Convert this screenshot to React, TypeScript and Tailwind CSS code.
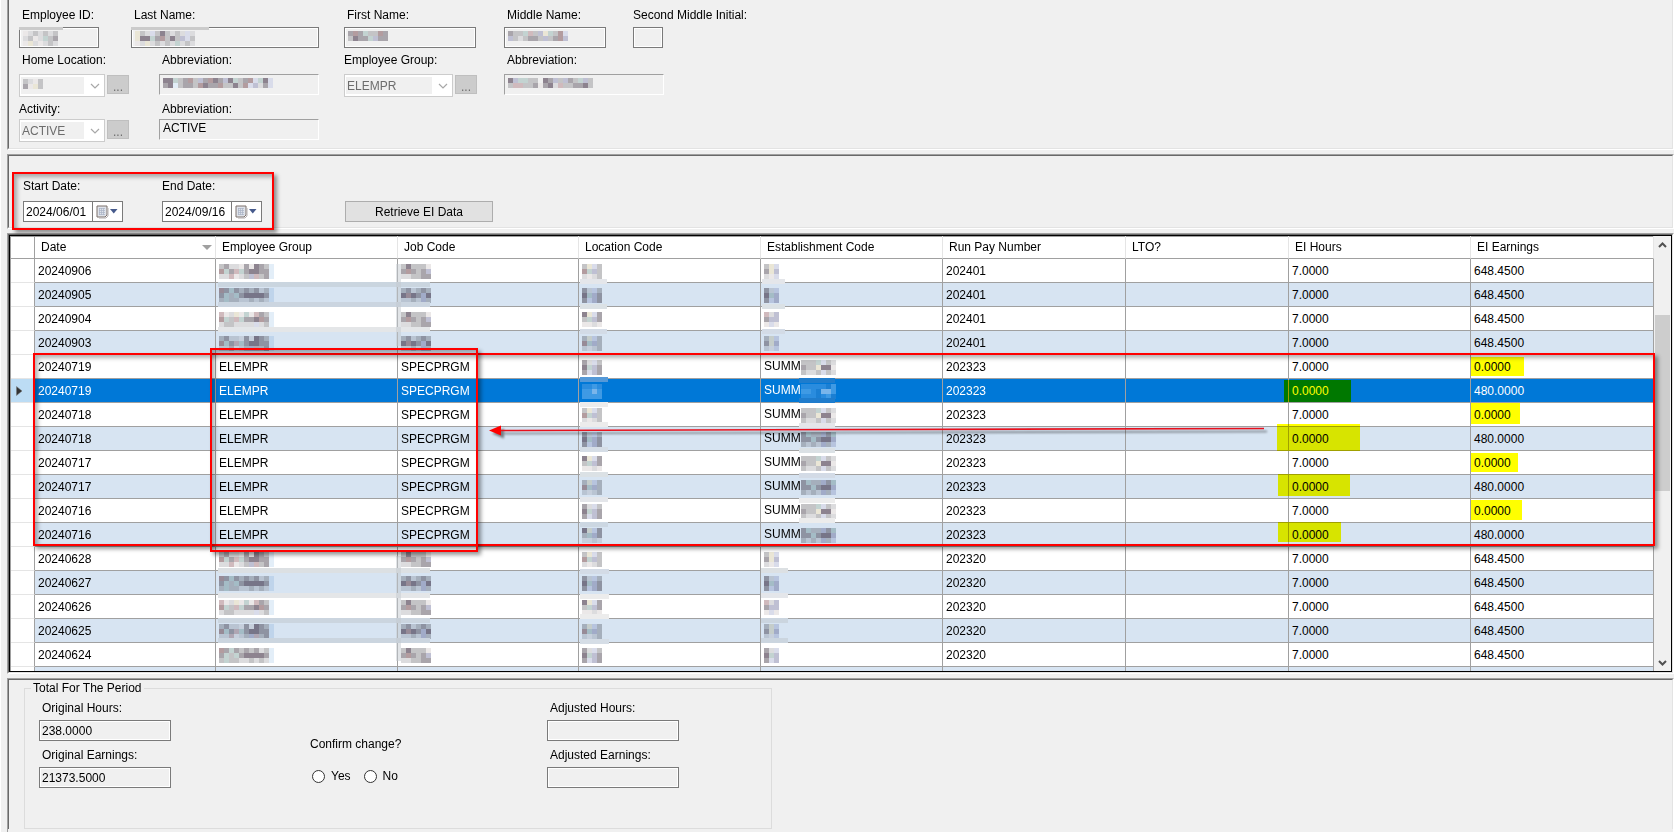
import React, { useState } from 'react';
import { clsx } from 'clsx';

const PALETTE: Record<string, string> = {
  a: '#8d838f',
  b: '#a9a5ab',
  c: '#c4c4c6',
  d: '#dcdcde',
  e: '#ebe8e8',
  k: '#d9dcea',
  l: '#bfc0d3',
  p: '#d0babd',
  r: '#b39c9f',
  t: '#c3d3d1',
  u: '#e3eef8',
  y: '#eae6d6',
  1: '#3f9ae4',
  2: '#2a8cde',
  3: '#7ab5ea',
  4: '#1b7fd3',
};

interface MosaicProps {
  rows: string[];
  className?: string;
}

// Redacted value, one letter per 5px block
const Mosaic: React.FC<MosaicProps> = ({ rows, className }) => (
  <svg
    width={rows[0].length * 5}
    height={rows.length * 5}
    shapeRendering="crispEdges"
    aria-hidden="true"
    className={className}
  >
    {rows.map((row, y) =>
      row.split('').map((key, x) =>
        PALETTE[key] ? (
          <rect key={`${x}-${y}`} x={x * 5} y={y * 5} width={5} height={5} fill={PALETTE[key]} />
        ) : null
      )
    )}
  </svg>
);

interface PanelProps {
  children: React.ReactNode;
  className?: string;
  open?: 'top' | 'bottom';
}

const Panel: React.FC<PanelProps> = ({ children, className, open }) => (
  <div
    className={clsx(
      'border-l border-l-[#a0a0a0] border-r border-r-white',
      open !== 'top' && 'border-t border-t-[#a0a0a0]',
      open !== 'bottom' && 'border-b border-b-white',
      className
    )}
  >
    <div
      className={clsx(
        'h-full border-l border-l-[#696969] border-r border-r-[#e3e3e3]',
        open !== 'top' && 'border-t border-t-[#696969]',
        open !== 'bottom' && 'border-b border-b-[#e3e3e3]'
      )}
    >
      {children}
    </div>
  </div>
);

interface FieldProps {
  id: string;
  label: string;
  value?: string;
  mosaic?: string[];
  smear?: string;
  sunken?: boolean;
  labelClass?: string;
  className?: string;
}

const Field: React.FC<FieldProps> = ({ id, label, value = '', mosaic, smear, sunken, labelClass = 'mb-1 pl-[3px]', className }) => (
  <div className={clsx('flex flex-col items-start', className)}>
    <label htmlFor={id} className={clsx('leading-4 whitespace-nowrap', labelClass)}>
      {label}
    </label>
    <div className="relative w-full">
      <input
        id={id}
        type="text"
        readOnly
        value={value}
        className={clsx(
          'block w-full h-[21px] px-0.5 border bg-[#f0f0f0] outline-none',
          sunken
            ? 'pb-1 pl-[3px] border-t-[#a0a0a0] border-l-[#a0a0a0] border-r-white border-b-white'
            : 'border-[#7a7a7a] shadow-[inset_0_0_0_1px_#fff]'
        )}
      />
      {smear && <span className={clsx('absolute top-0 left-0 h-[3px] bg-[#cbcbcb]', smear)} />}
      {mosaic && <Mosaic rows={mosaic} className="absolute top-1 left-1" />}
    </div>
  </div>
);

interface ComboProps {
  id: string;
  label: string;
  value: string;
  mosaic?: string[];
  width: string;
  labelClass: string;
}

const Combo: React.FC<ComboProps> = ({ id, label, value, mosaic, width, labelClass }) => (
  <div className="flex flex-col items-start">
    <label htmlFor={id} className={clsx('leading-4 whitespace-nowrap', labelClass)}>
      {label}
    </label>
    <div className="flex items-start gap-0.5">
      <div className={clsx('relative flex items-center h-[23px] px-px border border-[#cccccc] bg-white', width)}>
        <select
          id={id}
          disabled
          defaultValue={value}
          className="flex-1 min-w-0 h-[17px] pl-px leading-4 appearance-none bg-[#f0f0f0] text-[#6d6d6d] opacity-100"
        >
          <option value={value}>{value}</option>
        </select>
        <svg width="19" height="17" viewBox="0 0 19 17" className="shrink-0" aria-hidden="true">
          <path d="M7 7l4 4 4-4" fill="none" stroke="#a8a8a8" strokeWidth="1.2" />
        </svg>
        {mosaic && <Mosaic rows={mosaic} className="absolute top-1 left-[3px]" />}
      </div>
      <button
        type="button"
        disabled
        aria-label={`Browse ${label}`}
        className="mt-px w-[22px] h-[19px] pt-1 border border-[#bfbfbf] bg-[#cccccc] leading-3 text-[#6d6d6d]"
      >
        ...
      </button>
    </div>
  </div>
);

interface DateFieldProps {
  id: string;
  label: string;
  value: string;
  onChange: (value: string) => void;
}

const DateField: React.FC<DateFieldProps> = ({ id, label, value, onChange }) => (
  <div className="flex flex-col gap-[7px] w-[100px]">
    <label htmlFor={id} className="leading-4 whitespace-nowrap">
      {label}
    </label>
    <div className="flex h-[21px] border border-[#7a7a7a] bg-white">
      <input
        id={id}
        type="text"
        value={value}
        onChange={(e) => onChange(e.target.value)}
        className="w-[69px] pl-0.5 border-r border-[#7a7a7a] outline-none"
      />
      <button type="button" aria-label={`Pick ${label}`} className="flex flex-1 items-center pl-[3px] gap-px">
        <svg width="13" height="14" viewBox="0 0 13 14" aria-hidden="true">
          <path d="M1 1h10v9l-2 2H1z" fill="#dfe3ea" stroke="#7d706b" />
          <path d="M12 3v8l-2 2H3" fill="none" stroke="#b3aeb0" />
          <path d="M3 3.5h6M3 5.5h6M3 7.5h6M3 9.5h6M3.5 3v7M5.5 3v7M7.5 3v7" stroke="#a9b2c4" strokeWidth="0.7" />
        </svg>
        <svg width="8" height="5" viewBox="0 0 8 5" aria-hidden="true">
          <path d="M0 0h7.5L3.75 4.5z" fill="#465a8c" />
        </svg>
      </button>
    </div>
  </div>
);

const GROUP = [
  ['cbddebeabcu', 'rtbptbaabbu', 'ddpedclpcbu'],
  ['rbtbcbcbdcu', 'btctbaaaabu', 'ctccddcdcdu'],
  ['pedyetepbcu', 'rtcptbbarbu', 'dccddddkdcu'],
];
const JOB = [
  ['caccce', 'brbcbl', 'ddccbb'],
  ['cbdcbc', 'arabla', 'ddcdlc'],
];
const LOCATION = [
  ['cykc', 'rtlc', 'dedc'],
  ['bdkc', 'atlb', 'bklb'],
  ['aykb', 'ctlb', 'eede'],
];
const ESTABLISHMENT = [
  ['cyk', 'byl', 'dek'],
  ['bdk', 'atl', 'bkl'],
  ['pdl', 'bll', 'eke'],
];
const SCHOOL = [
  ['ccctkcd', 'bccyaae', 'cddckcd'],
  ['btcclbt', 'bbtbaal', 'cdcdlck'],
];

const HEADERS = [
  'Date',
  'Employee Group',
  'Job Code',
  'Location Code',
  'Establishment Code',
  'Run Pay Number',
  'LTO?',
  'EI Hours',
  'EI Earnings',
];

interface Row {
  date: string;
  run: string;
  hours: string;
  earnings: string;
  summer?: boolean;
  hoursMark?: string;
  earningsMark?: string;
}

const ROWS: Row[] = [
  { date: '20240906', run: '202401', hours: '7.0000', earnings: '648.4500' },
  { date: '20240905', run: '202401', hours: '7.0000', earnings: '648.4500' },
  { date: '20240904', run: '202401', hours: '7.0000', earnings: '648.4500' },
  { date: '20240903', run: '202401', hours: '7.0000', earnings: '648.4500' },
  { date: '20240719', run: '202323', hours: '7.0000', earnings: '0.0000', summer: true, earningsMark: 'left-0 top-0.5 w-[53px] h-[19px]' },
  { date: '20240719', run: '202323', hours: '0.0000', earnings: '480.0000', summer: true, hoursMark: '-left-[5px] top-px w-[67px] h-[22px]' },
  { date: '20240718', run: '202323', hours: '7.0000', earnings: '0.0000', summer: true, earningsMark: 'left-0 top-0 w-[49px] h-[21px]' },
  { date: '20240718', run: '202323', hours: '0.0000', earnings: '480.0000', summer: true, hoursMark: '-left-3 -top-[3px] w-[83px] h-[27px]' },
  { date: '20240717', run: '202323', hours: '7.0000', earnings: '0.0000', summer: true, earningsMark: 'left-0 top-0.5 w-[47px] h-[19px]' },
  { date: '20240717', run: '202323', hours: '0.0000', earnings: '480.0000', summer: true, hoursMark: '-left-[11px] -top-px w-[72px] h-[22px]' },
  { date: '20240716', run: '202323', hours: '7.0000', earnings: '0.0000', summer: true, earningsMark: 'left-0 top-px w-[51px] h-5' },
  { date: '20240716', run: '202323', hours: '0.0000', earnings: '480.0000', summer: true, hoursMark: '-left-[11px] -top-px w-[63px] h-5' },
  { date: '20240628', run: '202320', hours: '7.0000', earnings: '648.4500' },
  { date: '20240627', run: '202320', hours: '7.0000', earnings: '648.4500' },
  { date: '20240626', run: '202320', hours: '7.0000', earnings: '648.4500' },
  { date: '20240625', run: '202320', hours: '7.0000', earnings: '648.4500' },
  { date: '20240624', run: '202320', hours: '7.0000', earnings: '648.4500' },
  { date: '', run: '', hours: '', earnings: '' },
];

const SELECTED = 5;

// x, y, width, height, colour of the bands left around redacted cells
const SMEARS: [number, number, number, number, string][] = [
  [208, 46, 212, 5, '#cad5df'],
  [208, 66, 212, 5, '#cbd5e0'],
  [208, 91, 212, 5, '#e4e6e8'],
  [386, 28, 5, 82, '#c4cad080'],
  [208, 332, 212, 5, '#dce0e3'],
  [208, 357, 212, 5, '#e4e6e8'],
  [208, 382, 212, 5, '#cbd5df'],
  [208, 402, 212, 5, '#cbd5df'],
  [386, 320, 5, 105, '#c4cad080'],
  [570, 43, 27, 5, '#e4e6ea'],
  [570, 68, 27, 5, '#dbe1e5'],
  [570, 93, 27, 5, '#d3dbe6'],
  [570, 141, 28, 5, '#5599d8'],
  [570, 166, 28, 5, '#ececec'],
  [570, 186, 28, 5, '#ececec'],
  [570, 211, 28, 5, '#d5dde6'],
  [570, 236, 28, 5, '#dbe1e5'],
  [570, 261, 28, 5, '#e4e6ea'],
  [570, 286, 28, 5, '#ccd7e2'],
  [570, 333, 29, 5, '#d3dbe6'],
  [570, 358, 29, 5, '#ececec'],
  [570, 378, 29, 5, '#ececec'],
  [570, 403, 29, 5, '#d5dde6'],
  [752, 43, 23, 5, '#e4e6ea'],
  [752, 68, 23, 5, '#dbe1e5'],
  [752, 93, 23, 5, '#d3dbe6'],
  [789, 142, 36, 5, '#1f7ccc'],
  [789, 162, 36, 5, '#1f7ccc'],
  [789, 187, 36, 5, '#e4e6ea'],
  [789, 212, 36, 5, '#dbe1e5'],
  [789, 237, 36, 5, '#d3dbe6'],
  [789, 262, 36, 5, '#ececec'],
  [789, 282, 36, 5, '#ececec'],
  [751, 332, 27, 5, '#dce0e3'],
  [751, 357, 27, 5, '#e4e6ea'],
  [751, 382, 27, 5, '#cbd5df'],
  [751, 402, 27, 5, '#cbd5df'],
];

const EarningsTable: React.FC = () => (
  <table className="w-full table-fixed border-separate border-spacing-0">
    <colgroup>
      <col className="w-[24px]" />
      <col className="w-[181px]" />
      <col className="w-[182px]" />
      <col className="w-[181px]" />
      <col className="w-[182px]" />
      <col className="w-[182px]" />
      <col className="w-[183px]" />
      <col className="w-[163px]" />
      <col className="w-[182px]" />
      <col className="w-[183px]" />
    </colgroup>
    <thead>
      <tr className="h-[23px]">
        <th aria-label="Row" className="p-0 border-r border-b border-[#a0a0a0]" />
        {HEADERS.map((header) => (
          <th
            key={header}
            scope="col"
            className="p-0 pl-1.5 border-r border-b border-r-[#e5e5e5] border-b-[#a0a0a0] text-left font-normal leading-4 whitespace-nowrap"
          >
            <span className="flex items-center justify-between">
              {header}
              {header === 'Date' && (
                <svg width="10" height="5" viewBox="0 0 10 5" className="mr-[3px]" aria-hidden="true">
                  <path d="M0 0h10L5 5z" fill="#a0a0a0" />
                </svg>
              )}
            </span>
          </th>
        ))}
      </tr>
    </thead>
    <tbody>
      {ROWS.map((row, i) => {
        const selected = i === SELECTED;
        const cell = clsx(
          'p-0 pl-[3px] border-r border-b border-[#a0a0a0] leading-4 whitespace-nowrap',
          selected ? 'bg-[#0078d7] text-white' : i % 2 ? 'bg-[#d7e4f2]' : 'bg-white'
        );
        const blend = selected ? 'inline-block align-middle' : 'inline-block align-middle mix-blend-multiply';
        return (
          <tr key={i} className="h-6">
            <td
              className={clsx(
                'p-0 pl-[5px] border-r border-b border-r-[#a0a0a0] border-b-[#e5e5e5]',
                selected && 'bg-[#bcdcf4]'
              )}
            >
              {selected && (
                <svg width="7" height="10" viewBox="0 0 7 10" aria-hidden="true">
                  <path d="M0.5 0.5v9L6 5z" fill="#333333" stroke="#777777" strokeWidth="0.5" />
                </svg>
              )}
            </td>
            <td className={cell}>{row.date}</td>
            <td className={cell}>
              {row.summer ? 'ELEMPR' : row.date && <Mosaic rows={GROUP[i % 3]} className={blend} />}
            </td>
            <td className={cell}>
              {row.summer ? 'SPECPRGM' : row.date && <Mosaic rows={JOB[i % 2]} className={blend} />}
            </td>
            <td className={cell}>
              {row.date && <Mosaic rows={selected ? ['2212', '1131', '1111'] : LOCATION[i % 3]} className={blend} />}
            </td>
            <td className={cell}>
              {row.summer ? (
                <>
                  SUMM
                  <Mosaic rows={selected ? ['2222241', '1124331', '2224214'] : SCHOOL[i % 2]} className={blend} />
                </>
              ) : (
                row.date && <Mosaic rows={ESTABLISHMENT[i % 3]} className={blend} />
              )}
            </td>
            <td className={cell}>{row.run}</td>
            <td className={cell} />
            <td className={clsx(cell, 'relative')}>
              {row.hours}
              {row.hoursMark && <span className={clsx('absolute bg-[#ffff00] mix-blend-multiply', row.hoursMark)} />}
            </td>
            <td className={clsx(cell, 'relative')}>
              {row.earnings}
              {row.earningsMark && <span className={clsx('absolute bg-[#ffff00] mix-blend-multiply', row.earningsMark)} />}
            </td>
          </tr>
        );
      })}
    </tbody>
  </table>
);

const Scrollbar: React.FC = () => (
  <div className="flex flex-col items-center w-[17px] shrink-0 bg-[#f0f0f0]">
    <button type="button" aria-label="Scroll up" className="flex items-center justify-center w-full h-[17px]">
      <svg width="9" height="6" viewBox="0 0 9 6" aria-hidden="true">
        <path d="M1 5l3.5-3.5L8 5" fill="none" stroke="#505050" strokeWidth="2" />
      </svg>
    </button>
    <div className="flex-1 w-full pt-[62px] px-px">
      <div className="h-[176px] bg-[#cdcdcd]" />
    </div>
    <button type="button" aria-label="Scroll down" className="flex items-center justify-center w-full h-[17px]">
      <svg width="9" height="6" viewBox="0 0 9 6" aria-hidden="true">
        <path d="M1 1l3.5 3.5L8 1" fill="none" stroke="#505050" strokeWidth="2" />
      </svg>
    </button>
  </div>
);

const redBox = 'absolute pointer-events-none border-2 border-[#ff0000] shadow-[3px_3px_4px_rgba(0,0,0,0.4),inset_3px_3px_4px_rgba(0,0,0,0.3)]';

export default function App() {
  const [startDate, setStartDate] = useState('2024/06/01');
  const [endDate, setEndDate] = useState('2024/09/16');
  const [confirm, setConfirm] = useState('');

  return (
    <div className="flex flex-col gap-1 min-h-screen pl-1.5 border-l border-white bg-[#f0f0f0] font-['Liberation_Sans',Arial,sans-serif] text-[12px] text-black">
      <Panel open="top">
        <div className="grid grid-cols-[112px_28px_185px_160px_129px_1fr] gap-y-1 pt-[7px] pb-1.5 pl-[10px]">
          <Field
            id="employee-id"
            label="Employee ID:"
            mosaic={['edcdcdc', 'dcedtcb', 'eydedcd']}
            smear="w-11"
            className="w-20"
          />
          <Field
            id="last-name"
            label="Last Name:"
            mosaic={['ycdkcacdcdkd', 'yaatbrcaclkc', 'edydcdcdtdcd']}
            smear="w-[78px]"
            className="col-span-2 w-[188px]"
          />
          <Field id="first-name" label="First Name:" mosaic={['brbtccrb', 'cabbtlbb']} className="w-[132px]" />
          <Field id="middle-name" label="Middle Name:" mosaic={['bcctpclytcrk', 'lcdcbbclcbrl']} className="w-[102px]" />
          <Field id="second-initial" label="Second Middle Initial:" labelClass="mb-1" className="w-[30px]" />

          <div className="col-span-2">
            <Combo
              id="home-location"
              label="Home Location:"
              value=""
              mosaic={['cdec', 'beyc']}
              width="w-[86px]"
              labelClass="mb-1.5 pl-[3px]"
            />
          </div>
          <Field
            id="home-abbreviation"
            label="Abbreviation:"
            sunken
            mosaic={['aatcbrclbrablatcbrktak', 'baucbbcrabbrccacrkldbk']}
            labelClass="mb-1.5 pl-[3px]"
            className="w-[160px]"
          />
          <Combo id="employee-group" label="Employee Group:" value="ELEMPR" width="w-[109px]" labelClass="mb-1.5" />
          <Field
            id="group-abbreviation"
            label="Abbreviation:"
            sunken
            mosaic={['alttcc.ablclbctlc', 'cppccbebadpccbbac']}
            labelClass="mb-1.5 pl-[3px]"
            className="col-span-2 w-[160px]"
          />

          <div className="col-span-2 col-start-1">
            <Combo id="activity" label="Activity:" value="ACTIVE" width="w-[86px]" labelClass="mb-0.5" />
          </div>
          <Field
            id="activity-abbreviation"
            label="Abbreviation:"
            value="ACTIVE"
            sunken
            labelClass="mb-0.5 pl-[3px]"
            className="w-[160px]"
          />
        </div>
      </Panel>

      <Panel>
        <div className="relative flex items-end pt-[22px] pb-[5px] pl-[14px]">
          <DateField id="start-date" label="Start Date:" value={startDate} onChange={setStartDate} />
          <div className="ml-[39px]">
            <DateField id="end-date" label="End Date:" value={endDate} onChange={setEndDate} />
          </div>
          <button type="button" className="ml-[83px] w-[148px] h-[21px] border border-[#adadad] bg-[#e1e1e1]">
            Retrieve EI Data
          </button>
          <div className={clsx(redBox, 'left-[3px] top-4 w-[262px] h-[58px] z-10')} />
        </div>
      </Panel>

      <Panel>
        <div className="border border-black">
          <div className="relative flex h-[435px] bg-white overflow-hidden">
            <div className="flex-1 min-w-0 pl-px shadow-[inset_1px_1px_0_#a0a0a0]">
              <EarningsTable />
            </div>
            <Scrollbar />

            {/* annotations over the grid */}
            <svg className="absolute inset-0 w-full h-full pointer-events-none" aria-hidden="true">
              <g shapeRendering="crispEdges">
                {SMEARS.map(([x, y, width, height, fill]) => (
                  <rect key={`${x}-${y}`} x={x} y={y} width={width} height={height} fill={fill} />
                ))}
              </g>
              <g className="drop-shadow-[3px_3px_1px_rgba(0,0,0,0.45)]">
                <path d="M490 194.5L1254 192.5" stroke="#e8101c" strokeWidth="1.6" />
                <path d="M479 194.5l12-5v10z" fill="#ff0000" />
              </g>
            </svg>
            <div className={clsx(redBox, 'left-[23px] right-4 top-[117px] h-[193px]')} />
            <div className={clsx(redBox, 'left-[200px] top-[112px] w-[268px] h-[204px]')} />
          </div>
        </div>
      </Panel>

      <Panel open="bottom" className="flex-1">
        <fieldset className="ml-[15px] w-[748px] pl-[14px] pb-10 border border-[#dcdcdc]">
          <legend className="-ml-2 px-0.5 leading-4">Total For The Period</legend>
          <div className="grid grid-cols-[271px_237px_132px] pt-1">
            <div className="flex flex-col gap-1.5 w-[132px]">
              <Field id="original-hours" label="Original Hours:" value="238.0000" />
              <Field id="original-earnings" label="Original Earnings:" value="21373.5000" />
            </div>
            <div role="radiogroup" aria-labelledby="confirm-label" className="pt-9">
              <p id="confirm-label" className="leading-4">
                Confirm change?
              </p>
              <div className="flex items-center gap-[13px] mt-4 pl-0.5">
                {['Yes', 'No'].map((option) => (
                  <label key={option} className="flex items-center gap-1.5 leading-4">
                    <input
                      type="radio"
                      name="confirm"
                      value={option}
                      checked={confirm === option}
                      onChange={() => setConfirm(option)}
                      className="appearance-none w-[13px] h-[13px] rounded-full border border-[#333333] bg-white checked:shadow-[inset_0_0_0_3px_#fff] checked:bg-[#333333]"
                    />
                    {option}
                  </label>
                ))}
              </div>
            </div>
            <div className="flex flex-col gap-1.5">
              <Field id="adjusted-hours" label="Adjusted Hours:" />
              <Field id="adjusted-earnings" label="Adjusted Earnings:" />
            </div>
          </div>
        </fieldset>
      </Panel>
    </div>
  );
}
